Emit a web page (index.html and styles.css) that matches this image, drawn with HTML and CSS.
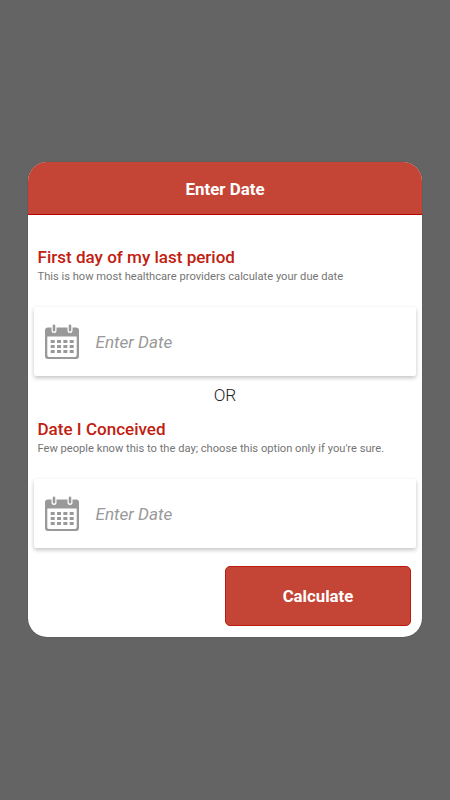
FILE: index.html
```html
<!DOCTYPE html>
<html lang="en">
<head>
<meta charset="utf-8">
<title>Enter Date</title>
<link rel="stylesheet" href="styles.css">
</head>
<body>
<svg width="0" height="0" class="defs" aria-hidden="true">
  <symbol id="calendar" viewBox="0 0 36 36">
    <path fill="#999" fill-rule="evenodd" d="M4 3.500H32Q35 3.500 35 6.500V32Q35 35 32 35H4Q1 35 1 32V6.500Q1 3.500 4 3.500ZM3.300 12.500V31.300Q3.300 33 5 33H31Q32.700 33 32.700 31.300V12.500Z"/>
    <path d="M10 1.500V6.500M26 1.500V6.500" stroke="#fff" stroke-width="5" stroke-linecap="round"/>
    <path d="M10 1.700V6.300M26 1.700V6.300" stroke="#999" stroke-width="2.600" stroke-linecap="round"/>
    <path d="M6.700 17.500H29.700M6.700 22.500H29.700M6.700 27.500H29.700" stroke="#999" stroke-width="3" stroke-dasharray="4 2.330"/>
  </symbol>
</svg>
<main class="dialog">
  <header class="dialog-header">Enter Date</header>
  <section class="option">
    <h2>First day of my last period</h2>
    <p>This is how most healthcare providers calculate your due date</p>
    <div class="field"><svg><use href="#calendar"/></svg><span>Enter Date</span></div>
  </section>
  <div class="divider">OR</div>
  <section class="option">
    <h2>Date I Conceived</h2>
    <p>Few people know this to the day; choose this option only if you're sure.</p>
    <div class="field"><svg><use href="#calendar"/></svg><span>Enter Date</span></div>
  </section>
  <button class="calculate">Calculate</button>
</main>
</body>
</html>
```
FILE: styles.css
```css
* { box-sizing: border-box; }
body {
  margin: 0;
  height: 800px;
  background: #646464;
  font-family: Roboto, sans-serif;
  display: flex;
  justify-content: center;
  padding-top: 162px;
  align-items: flex-start;
}
.defs { position: absolute; }
.dialog {
  width: 394px;
  height: 475px;
  background: #fff;
  border-radius: 19px;
  overflow: hidden;
  display: flex;
  flex-direction: column;
  box-shadow: 0 0 1px #333;
}
.dialog-header {
  height: 53px;
  flex: none;
  margin-bottom: 32px;
  background: #c44536;
  border-bottom: 1px solid #b80000;
  color: #fff;
  font-size: 16.9px;
  font-weight: 700;
  line-height: 54px;
  text-align: center;
}
.option { padding: 0 6px 0 5.5px; }
.option h2 {
  margin: 0 4px;
  font-size: 17.04px;
  font-weight: 500;
  line-height: 20px;
  color: #c0200f;
  white-space: nowrap;
}
.option p {
  margin: 3px 4px 23px;
  font-size: 11.15px;
  line-height: 14px;
  color: #757575;
  white-space: nowrap;
}
.field {
  height: 69px;
  display: flex;
  align-items: center;
  padding: 1px 0 0 10px;
  gap: 16px;
  background: #fff;
  border-radius: 2px;
  box-shadow: 0 2px 4px rgba(0, 0, 0, .24);
  color: #999;
  font-size: 17.1px;
  font-weight: 400;
  font-style: italic;
}
.field svg { width: 36px; height: 36px; }
.field span { line-height: 20px; padding-bottom: 1px; }
.divider {
  height: 43px;
  line-height: 38px;
  text-align: center;
  font-size: 17.3px;
  font-weight: 300;
  color: #222;
}
.calculate {
  align-self: flex-end;
  width: 186px;
  height: 60px;
  margin: 18px 11px 0 0;
  padding: 0;
  border: 1px solid #bd1a0e;
  border-radius: 5px;
  background: #c44536;
  color: #fff;
  font: 700 16.8px Roboto, sans-serif;
}
```
